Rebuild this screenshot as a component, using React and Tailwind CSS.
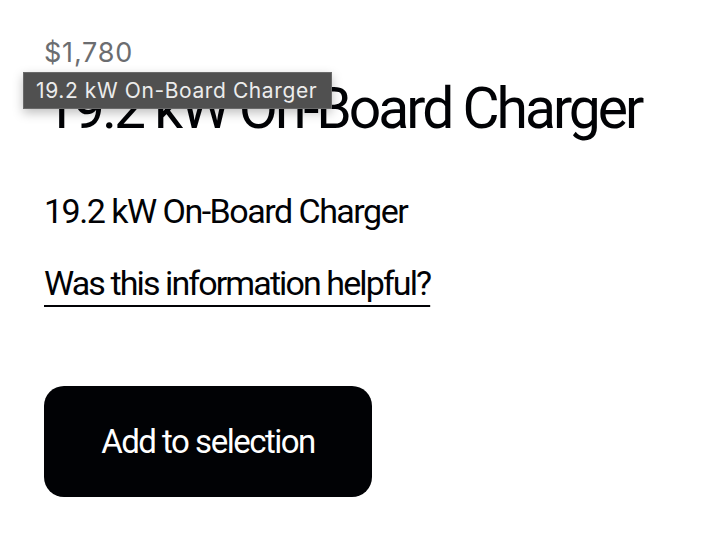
export default function App() {
  const porsche = "font-['Roboto','Liberation_Sans',sans-serif]";
  return (
    <div className="relative min-h-[552px] w-[718px] bg-white pl-[44px] text-[#010205]">
      <div className="pt-[37px] font-['Inter','Liberation_Sans',sans-serif] text-[27px] leading-[32px] tracking-[0.8px] text-[#6b6d70]">
        $1,780
      </div>

      <h1 className={`${porsche} mt-[6px] whitespace-nowrap text-[57px] font-normal leading-[68px] tracking-[-3px]`}>
        19.2 kW On-Board Charger
      </h1>

      <p className={`${porsche} mt-[48px] text-[34px] leading-[40px] tracking-[-1.5px]`}>
        19.2 kW On-Board Charger
      </p>

      <a
        href="#"
        className={`${porsche} mt-[32px] inline-block text-[34px] leading-[40px] tracking-[-1.9px] underline decoration-2 underline-offset-[10px]`}
      >
        Was this information helpful?
      </a>

      <div className="mt-[83px]">
        <button
          className={`${porsche} flex h-[111px] w-[328px] items-center justify-center rounded-[20px] bg-[#010205] text-[33px] tracking-[-1.5px] text-white`}
        >
          Add to selection
        </button>
      </div>

      {/* native title tooltip */}
      <div className="absolute left-[23px] top-[72px] flex h-[37px] w-[309px] items-center border border-[#6a6a6a] bg-[#505050] pl-[12px] font-['Inter','Liberation_Sans',sans-serif] text-[21px] tracking-[0.6px] text-[#ececec] shadow-[0_4px_10px_rgba(0,0,0,0.25)]">
        19.2 kW On-Board Charger
      </div>
    </div>
  );
}
